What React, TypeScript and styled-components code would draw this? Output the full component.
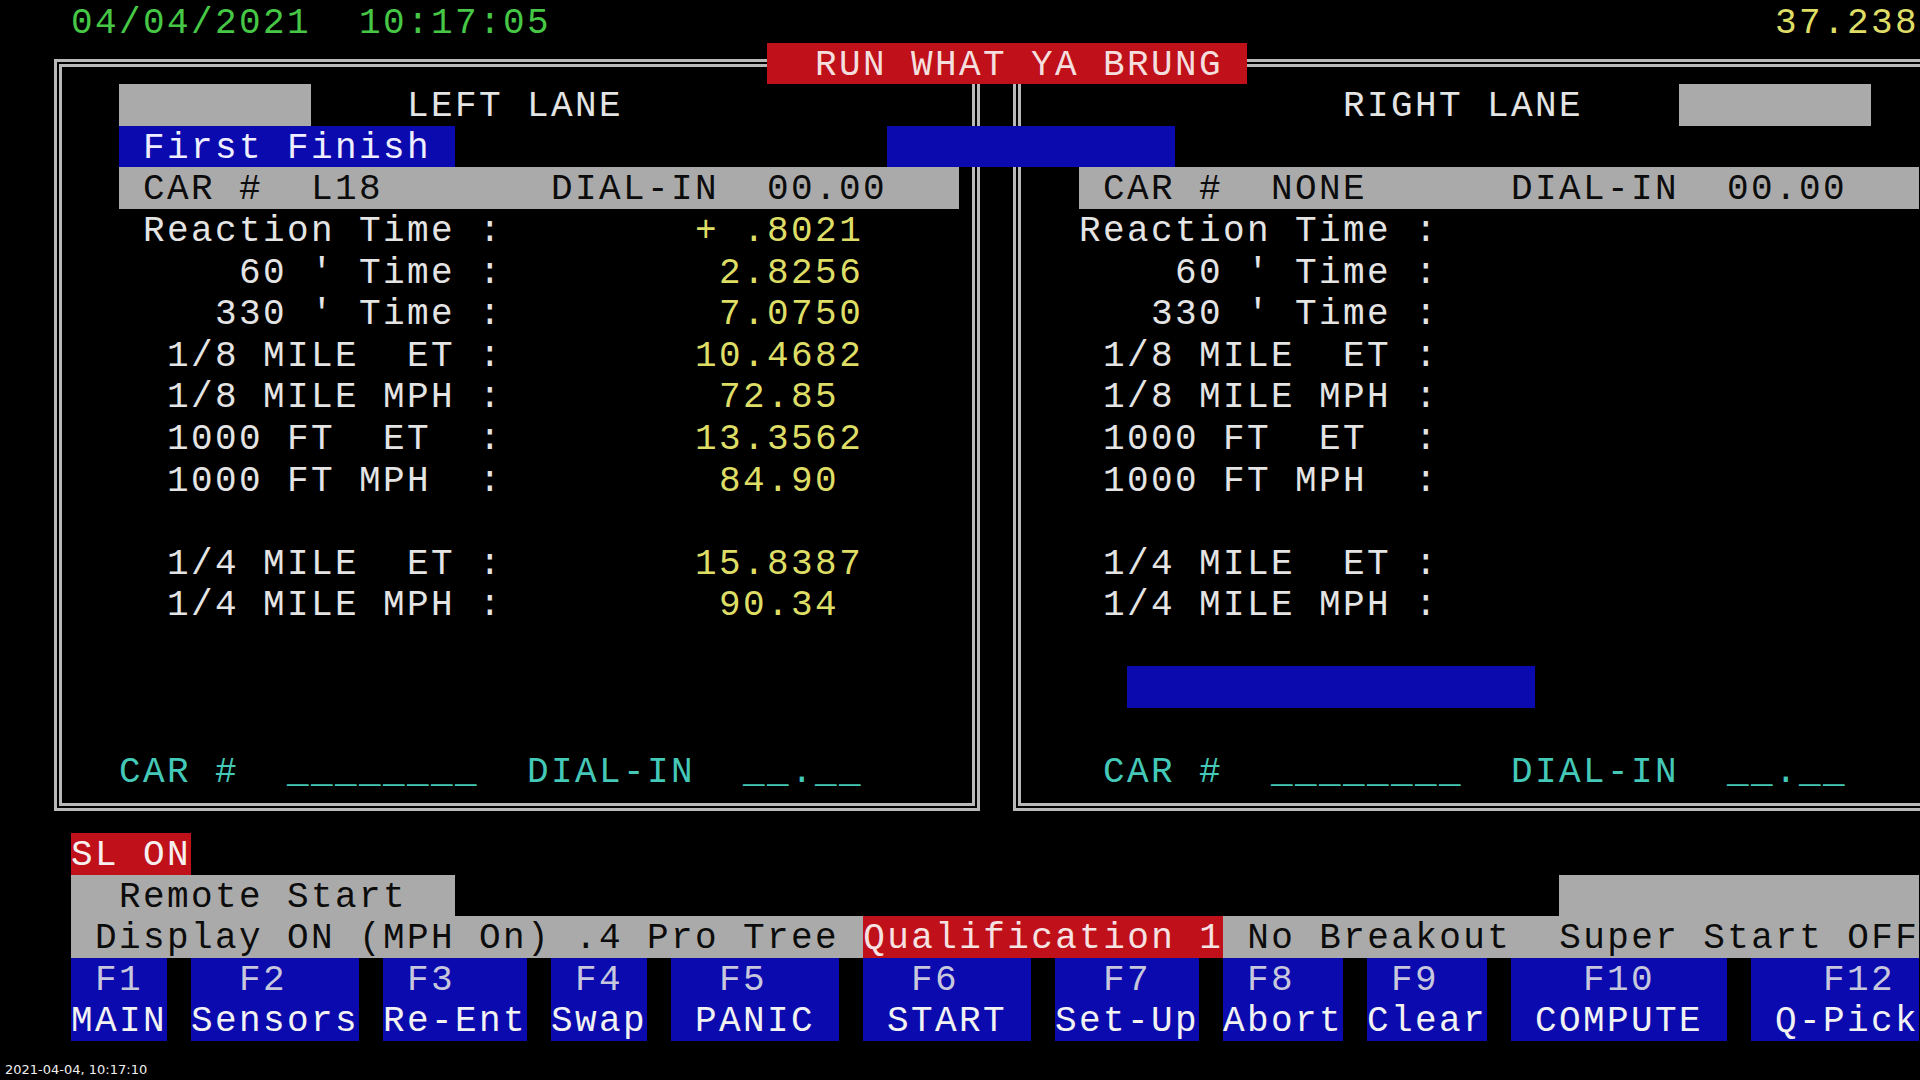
import React from "react";
import styled, { createGlobalStyle } from "styled-components";

const ROW = 41.6;
const CELL = 24;

const GRAY = "#aaaaaa";
const BLUE = "#0a0aae";
const RED = "#c0101a";
const INK = "#0c0c0c";
const WHITE = "#e4e4e4";
const YELLOW = "#dede66";
const GREEN = "#46c846";
const CYAN = "#44c8b8";
const FRAME = "#b9b9b9";

const Global = createGlobalStyle`
  html, body { margin: 0; padding: 0; background: #000; }
  body { overflow: hidden; }
`;

const Screen = styled.div`
  position: relative;
  width: 1920px;
  height: 1080px;
  overflow: hidden;
  box-sizing: border-box;
  padding-top: 1px;
  background: #000;
  font-family: "Liberation Mono", "DejaVu Sans Mono", monospace;
  font-size: 36px;
  letter-spacing: 2.4px;
  color: ${WHITE};
`;

const Line = styled.div<{ $pad?: number }>`
  height: ${ROW}px;
  line-height: 46px;
  white-space: pre;
  padding-left: ${(p) => p.$pad ?? 0}px;
`;

const Seg = styled.span<{ $bg?: string; $fg?: string }>`
  display: inline-block;
  vertical-align: top;
  height: ${ROW}px;
  background: ${(p) => p.$bg ?? "transparent"};
  color: ${(p) => p.$fg ?? "inherit"};
`;

const TopBar = styled.div`
  display: flex;
  height: ${ROW}px;
  line-height: 46px;
  white-space: pre;
  padding: 0 1px 0 ${47 + CELL}px;
`;

const Clock = styled.span`
  color: ${GREEN};
`;

const Timer = styled.span`
  margin-left: auto;
  color: ${YELLOW};
`;

const Board = styled.div`
  position: relative;
  height: ${ROW * 19}px;
  box-sizing: border-box;
  padding: 16.9px 0 0 54px;
  display: flex;
  gap: 33px;
`;

const Panel = styled.div<{ $w: number; $padLeft: number }>`
  flex: none;
  width: ${(p) => p.$w}px;
  height: 752px;
  box-sizing: border-box;
  border: 8px double ${FRAME};
  padding: 16.7px 0 0 ${(p) => p.$padLeft}px;
  display: flex;
  flex-direction: column;
`;

const Title = styled.div`
  position: absolute;
  top: 0;
  left: ${47 + 30 * CELL}px;
  height: ${ROW}px;
  line-height: 46px;
  white-space: pre;
  background: ${RED};
  color: #f4dede;
`;

const Marker = styled.div<{ $row: number; $col: number; $cells: number }>`
  position: absolute;
  top: ${(p) => p.$row * ROW}px;
  left: ${(p) => 47 + p.$col * CELL}px;
  width: ${(p) => p.$cells * CELL}px;
  height: ${ROW}px;
  background: ${BLUE};
`;

const Value = styled.span`
  color: ${YELLOW};
`;

const Entry = styled.span`
  color: ${CYAN};
`;

const KeyBar = styled.div`
  display: flex;
  gap: ${CELL}px;
  padding-left: ${47 + CELL}px;
`;

const Key = styled.div<{ $cells: number }>`
  flex: none;
  width: ${(p) => p.$cells * CELL}px;
  height: ${ROW * 2}px;
  background: ${BLUE};
  display: flex;
  flex-direction: column;
`;

const KeyCap = styled.div<{ $off: number }>`
  height: ${ROW}px;
  line-height: 46px;
  white-space: pre;
  padding-left: ${(p) => p.$off * CELL}px;
  color: #c6c6dc;
`;

const KeyName = styled(KeyCap)`
  color: #f2f2f2;
`;

const Stamp = styled.div`
  padding: 21px 0 0 5px;
  font-family: "DejaVu Sans", "Liberation Sans", sans-serif;
  font-size: 13px;
  line-height: 16px;
  letter-spacing: 0;
  color: #f0f0f0;
`;

const READOUTS: { indent: number; label: string; value: string }[] = [
  { indent: 3, label: "Reaction Time :", value: "        + .8021" },
  { indent: 7, label: "60 ' Time :", value: "         2.8256" },
  { indent: 6, label: "330 ' Time :", value: "         7.0750" },
  { indent: 4, label: "1/8 MILE  ET :", value: "        10.4682" },
  { indent: 4, label: "1/8 MILE MPH :", value: "         72.85" },
  { indent: 4, label: "1000 FT  ET  :", value: "        13.3562" },
  { indent: 4, label: "1000 FT MPH  :", value: "         84.90" },
  { indent: 0, label: "", value: "" },
  { indent: 4, label: "1/4 MILE  ET :", value: "        15.8387" },
  { indent: 4, label: "1/4 MILE MPH :", value: "         90.34" },
];

const KEYS: { cap: string; name: string; cells: number; capOff: number; nameOff: number }[] = [
  { cap: "F1", name: "MAIN", cells: 4, capOff: 1, nameOff: 0 },
  { cap: "F2", name: "Sensors", cells: 7, capOff: 2, nameOff: 0 },
  { cap: "F3", name: "Re-Ent", cells: 6, capOff: 1, nameOff: 0 },
  { cap: "F4", name: "Swap", cells: 4, capOff: 1, nameOff: 0 },
  { cap: "F5", name: "PANIC", cells: 7, capOff: 2, nameOff: 1 },
  { cap: "F6", name: "START", cells: 7, capOff: 2, nameOff: 1 },
  { cap: "F7", name: "Set-Up", cells: 6, capOff: 2, nameOff: 0 },
  { cap: "F8", name: "Abort", cells: 5, capOff: 1, nameOff: 0 },
  { cap: "F9", name: "Clear", cells: 5, capOff: 1, nameOff: 0 },
  { cap: "F10", name: "COMPUTE", cells: 9, capOff: 3, nameOff: 1 },
  { cap: "F12", name: "Q-Pick", cells: 7, capOff: 3, nameOff: 1 },
];

const sp = (n: number) => " ".repeat(Math.max(0, n));

export default function App() {
  return (
    <>
      <Global />
      <Screen>
        <TopBar>
          <Clock>04/04/2021  10:17:05</Clock>
          <Timer>37.238</Timer>
        </TopBar>

        <Board>
          <Panel $w={926} $padLeft={9}>
            <Line>
              {sp(2)}
              <Seg $bg={GRAY}>{sp(8)}</Seg>
              {sp(4)}LEFT LANE
            </Line>
            <Line>
              {sp(2)}
              <Seg $bg={BLUE} $fg="#eeeeff">
                {" First Finish "}
              </Seg>
            </Line>
            <Line>
              {sp(2)}
              <Seg $bg={GRAY} $fg={INK}>
                {" CAR #  L18       DIAL-IN  00.00   "}
              </Seg>
            </Line>
            {READOUTS.map((r, i) => (
              <Line key={i}>
                {sp(r.indent)}
                {r.label}
                <Value>{r.value}</Value>
              </Line>
            ))}
            <Line />
            <Line />
            <Line />
            <Line>
              {sp(2)}
              <Entry>CAR #  ________  DIAL-IN  __.__</Entry>
            </Line>
          </Panel>

          <Panel $w={947} $padLeft={10}>
            <Line>
              {sp(13)}RIGHT LANE{sp(4)}
              <Seg $bg={GRAY}>{sp(8)}</Seg>
            </Line>
            <Line />
            <Line>
              {sp(2)}
              <Seg $bg={GRAY} $fg={INK}>
                {" CAR #  NONE      DIAL-IN  00.00   "}
              </Seg>
            </Line>
            {READOUTS.map((r, i) => (
              <Line key={i}>
                {sp(r.indent - 1)}
                {r.label}
              </Line>
            ))}
            <Line />
            <Line>
              {sp(4)}
              <Seg $bg={BLUE}>{sp(17)}</Seg>
            </Line>
            <Line />
            <Line>
              {sp(3)}
              <Entry>CAR #  ________  DIAL-IN  __.__</Entry>
            </Line>
          </Panel>

          <Title>{"  RUN WHAT YA BRUNG "}</Title>
          <Marker $row={2} $col={35} $cells={12} />
        </Board>

        <Line $pad={47}>
          {" "}
          <Seg $bg={RED} $fg="#f6f0f0">
            SL ON
          </Seg>
        </Line>
        <Line $pad={47}>
          {" "}
          <Seg $bg={GRAY} $fg={INK}>
            {"  Remote Start  "}
          </Seg>
          {sp(46)}
          <Seg $bg={GRAY}>{sp(15)}</Seg>
        </Line>
        <Line $pad={47}>
          {" "}
          <Seg $bg={GRAY} $fg={INK}>
            {" Display ON (MPH On) .4 Pro Tree "}
          </Seg>
          <Seg $bg={RED} $fg="#f6e2e2">
            Qualification 1
          </Seg>
          <Seg $bg={GRAY} $fg={INK}>
            {" No Breakout  Super Start OFF"}
          </Seg>
        </Line>
        <KeyBar>
          {KEYS.map((k) => (
            <Key key={k.cap} $cells={k.cells}>
              <KeyCap $off={k.capOff}>{k.cap}</KeyCap>
              <KeyName $off={k.nameOff}>{k.name}</KeyName>
            </Key>
          ))}
        </KeyBar>

        <Stamp>2021-04-04, 10:17:10</Stamp>
      </Screen>
    </>
  );
}
